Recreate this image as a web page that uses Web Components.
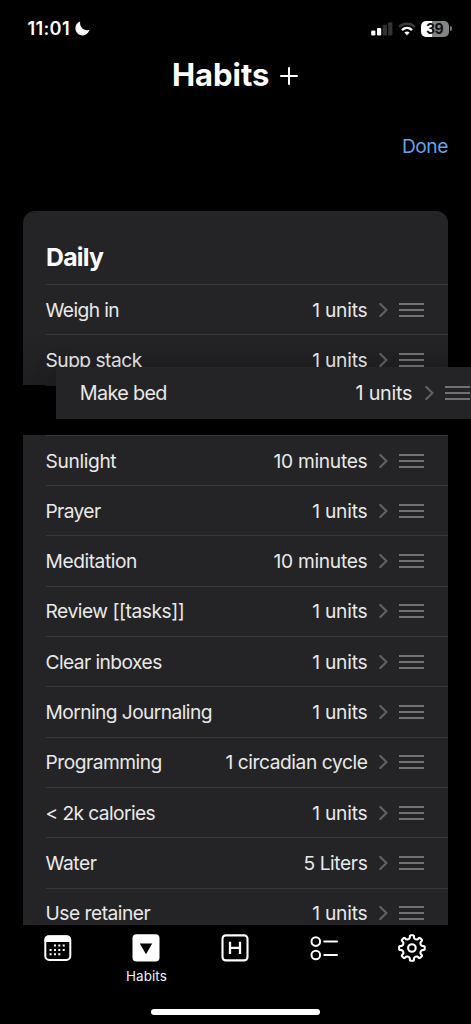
<!DOCTYPE html>
<html lang="en">
<head>
<meta charset="utf-8">
<title>Habits</title>
<style>
html,body{margin:0;background:#000;height:1024px;overflow:hidden}
body{width:471px;font-family:Inter,"Liberation Sans",sans-serif;color:#e9e9e9}
</style>
</head>
<body>
<habits-app></habits-app>
<script>
const define = (name, html, setup) => customElements.define(name, class extends HTMLElement {
  constructor() {
    super();
    const t = document.createElement('template');
    t.innerHTML = html;
    this.attachShadow({mode: 'open'}).append(t.content.cloneNode(true));
  }
  connectedCallback() { if (setup) setup(this, this.shadowRoot); }
});

// Tracks a label so that it takes the given width.
const track = (span, width, chars) => {
  if (!width || !chars) return;
  span.style.letterSpacing = '0px';
  const natural = span.getBoundingClientRect().width;
  if (natural) span.style.letterSpacing = ((width - natural) / chars).toFixed(3) + 'px';
};

define('status-bar', `<style>
:host{display:flex;height:56px;box-sizing:border-box;padding:18px 19px 0 27.5px;justify-content:space-between;align-items:flex-start;color:#fff}
.l,.r{display:flex;align-items:center;height:21px}
.time{font-size:18.2px;font-weight:600;letter-spacing:.3px;line-height:21px}
svg{display:block}
.moon{margin-left:5px}
.wifi{margin:0 5px 0 5px}
.bat{display:flex;align-items:center}
.cell{width:28px;height:16px;border-radius:5px;background:linear-gradient(90deg,#fff 39%,#858585 39%);color:#111;font-size:14px;font-weight:700;line-height:16.5px;text-align:center;letter-spacing:-.5px;text-indent:-1px}
.tip{width:2px;height:5px;margin-left:1px;border-radius:0 2px 2px 0;background:#777}
</style>
<div class="l"><span class="time">11:01</span>
<svg class="moon" width="15" height="15" viewBox="0 0 15 15"><path d="M5.2.5C4.2 5.6 8.2 10.2 14.4 9.1C13.3 12.5 10.6 14.4 7.5 14.4C3.5 14.4.4 11.4.4 7.3C.4 4.2 2.2 1.5 5.2.5Z" fill="#fff"/></svg></div>
<div class="r">
<svg width="22" height="15" viewBox="0 0 22 15"><rect x=".2" y="9.5" width="4.2" height="5" rx="1.2" fill="#fff"/><rect x="6" y="7" width="4.2" height="7.5" rx="1.2" fill="#fff"/><rect x="11.7" y="3.8" width="4.2" height="10.7" rx="1.2" fill="#333"/><rect x="17.2" y="1.3" width="4.2" height="13.2" rx="1.2" fill="#333"/></svg>
<svg class="wifi" width="18" height="14" viewBox="0 0 18 14"><g fill="none"><path d="M1.2 4.8C5.6.6 12.4.6 16.8 4.8" stroke="#3b3b3b" stroke-width="2.5"/><path d="M4 8.1C6.9 5.3 11.1 5.3 14 8.1" stroke="#fff" stroke-width="2.5"/></g><path d="M9 13.3L6.3 10.6Q9 8.4 11.7 10.6Z" fill="#fff"/></svg>
<div class="bat"><div class="cell">39</div><div class="tip"></div></div>
</div>`);

define('page-header', `<style>
:host{display:block;height:155px}
.t{display:flex;height:38px;align-items:center;padding-left:172px;color:#fff}
h1{margin:-2px 0 0;font-size:31px;font-weight:700;line-height:37px;letter-spacing:-.05px;width:108px;white-space:nowrap}
svg{display:block;margin-top:1px}
.done{display:flex;justify-content:flex-end;padding:40px 23px 0 0;font-size:19.2px;line-height:24px;color:#60a5e8;letter-spacing:-.45px}
</style>
<div class="t"><h1><slot></slot></h1><svg width="18" height="18" viewBox="0 0 18 18"><path d="M9 1V17M1 9H17" stroke="#fff" stroke-width="2" stroke-linecap="round"/></svg></div>
<div class="done">Done</div>`);

define('habit-row', `<style>
:host{display:block;height:50.3px;background:#242426;padding-left:22.5px}
.row{box-sizing:border-box;height:100%;border-top:1px solid #38383a;display:flex;align-items:center;padding-right:24px;font-size:19.2px;line-height:24px;white-space:nowrap}
.v{margin-left:auto}
svg{display:block;flex:none}
.c{margin:0 10.8px 0 11.8px}
:host([shade]) {background:linear-gradient(#242426,#1e1e20)}
:host([gap]){background:#000}
:host([gap]) .row{border-color:#1c1c1e}
:host([gap]) .row>*{display:none}
:host([lifted]){position:absolute;left:56px;top:366.7px;width:415px;height:52px;box-sizing:border-box;padding-left:23.8px;box-shadow:0 0 24px rgba(0,0,0,.16)}
:host([lifted]) .row{border-top:0;padding:0 1.2px 0 0;font-size:19.8px}
:host([lifted]) .c{margin:0 11px 0 12.5px}
</style>
<div class="row"><span class="n"><slot></slot></span><span class="v"></span>
<svg class="c" width="9" height="14" viewBox="0 0 9 14"><path d="M1.3 1L7.5 7L1.3 13" fill="none" stroke="#626264" stroke-width="2.1" stroke-linecap="round" stroke-linejoin="round"/></svg>
<svg class="h" width="25" height="14" viewBox="0 0 25 14"><path d="M0 .9H25M0 7H25M0 13.1H25" stroke="#8c8c8e" stroke-width="1.5"/></svg></div>`,
(el, root) => {
  const v = root.querySelector('.v'), text = el.getAttribute('value') || '';
  v.textContent = text;
  track(root.querySelector('.n'), +el.getAttribute('w'), el.textContent.length);
  track(v, +el.getAttribute('vw'), text.length);
});

define('habit-list', `<style>
:host{display:block;position:relative;margin:0 23px;height:713.5px;overflow:hidden;border-radius:12px 12px 0 0}
header{height:73px;box-sizing:border-box;padding:31px 0 0 23px;background:#242426;color:#fff;font-size:24.8px;font-weight:700;line-height:30px;letter-spacing:-.75px}
</style><header>Daily</header><slot></slot>`);

define('tab-item', `<style>
:host{display:flex;flex-direction:column;align-items:center;width:88.7px;color:#f2f2f2}
.i{height:28px}.l{font-size:13.4px;line-height:18px;margin-top:5.5px;letter-spacing:.1px}
</style><div class="i"><slot></slot></div><div class="l"><slot name="label"></slot></div>`);

define('tab-bar', `<style>
:host{display:flex;height:74px;padding:9px 0 0 13.4px}
svg{display:block}
</style>
<tab-item><svg width="28" height="28" viewBox="0 0 28 28"><rect x="1.3" y="2.2" width="25" height="23.8" rx="4" fill="none" stroke="#fff" stroke-width="2"/><path d="M.5 8V5.5Q.5 1.5 4.5 1.5H23Q27 1.5 27 5.5V8Z" fill="#fff"/><path d="M10 10.5h2v2h-2zM14.3 10.5h2v2h-2zM18.7 10.5h2v2h-2zM5.6 15h2v2h-2zM10 15h2v2h-2zM14.3 15h2v2h-2zM18.7 15h2v2h-2zM5.6 19.3h2v2h-2zM10 19.3h2v2h-2zM14.3 19.3h2v2h-2z" fill="#fff"/></svg></tab-item>
<tab-item><svg width="28" height="28" viewBox="0 0 28 28"><rect x=".5" y=".2" width="27" height="27.2" rx="4" fill="#fff"/><path d="M7.8 9.4H20.2L14 20.2Z" fill="#000"/></svg><span slot="label">Habits</span></tab-item>
<tab-item><svg width="28" height="28" viewBox="0 0 28 28"><rect x="1.5" y="1.4" width="25" height="25" rx="3.3" fill="none" stroke="#fff" stroke-width="2.1"/><path d="M9 7.7V20.1M19 7.7V20.1M9 13.9H19" fill="none" stroke="#fff" stroke-width="2.3"/></svg></tab-item>
<tab-item><svg width="28" height="28" viewBox="0 0 28 28"><g fill="none" stroke="#fff" stroke-width="2"><circle cx="5.8" cy="7.6" r="4.3"/><circle cx="5.8" cy="21" r="4.3"/><path d="M14.3 7.6H27M14.3 21H27" stroke-linecap="round"/></g></svg></tab-item>
<tab-item><svg width="28" height="28" viewBox="0 0 28 28"><g fill="none" stroke="#fff" stroke-width="2.1" stroke-linejoin="round"><path class="gear"/><circle cx="13.9" cy="14" r="3.8"/></g></svg></tab-item>`,
(el, root) => {
  // Eight rounded teeth, each described by polar points around the hub.
  let d = '';
  for (let i = 0; i < 8; i++) {
    const p = (r, a) => { const t = (i * 45 - 90 + a) * Math.PI / 180; return (13.9 + r * Math.cos(t)).toFixed(2) + ' ' + (14 + r * Math.sin(t)).toFixed(2); };
    d += (i ? 'L' : 'M') + p(10.3, -12) + 'L' + p(12.1, -9.5) + 'Q' + p(13, -8) + ' ' + p(12.8, -4) + 'L' + p(12.8, 4) + 'Q' + p(13, 8) + ' ' + p(12.1, 9.5) + 'L' + p(10.3, 12) + 'Q' + p(8.7, 22.5) + ' ' + p(10.3, 33);
  }
  root.querySelector('.gear').setAttribute('d', d + 'Z');
});

define('habits-app', `<style>
:host{display:block;position:relative;width:471px;height:1024px;background:#000;overflow:hidden}
.home{width:169px;height:6px;border-radius:3px;background:#fff;margin:1px 0 0 151px}
</style>
<status-bar></status-bar>
<page-header>Habits</page-header>
<habit-list>
<habit-row value="1 units" w="73.6" vw="55.2">Weigh in</habit-row>
<habit-row shade value="1 units" w="96.2" vw="55.2">Supp stack</habit-row>
<habit-row gap></habit-row>
<habit-row value="10 minutes" w="70.8" vw="93.8">Sunlight</habit-row>
<habit-row value="1 units" w="55" vw="55.2">Prayer</habit-row>
<habit-row value="10 minutes" w="91.4" vw="93.8">Meditation</habit-row>
<habit-row value="1 units" w="138.8" vw="55.2">Review [[tasks]]</habit-row>
<habit-row value="1 units" w="116.2" vw="55.2">Clear inboxes</habit-row>
<habit-row value="1 units" w="166.4" vw="55.2">Morning Journaling</habit-row>
<habit-row value="1 circadian cycle" w="116.4" vw="142">Programming</habit-row>
<habit-row value="1 units" w="109.6" vw="55.2">&lt; 2k calories</habit-row>
<habit-row value="5 Liters" w="51" vw="64">Water</habit-row>
<habit-row value="1 units" w="104.8" vw="55.2">Use retainer</habit-row>
</habit-list>
<tab-bar></tab-bar>
<div class="home"></div>
<habit-row lifted value="1 units" w="87" vw="56.8">Make bed</habit-row>`);
</script>
</body>
</html>
